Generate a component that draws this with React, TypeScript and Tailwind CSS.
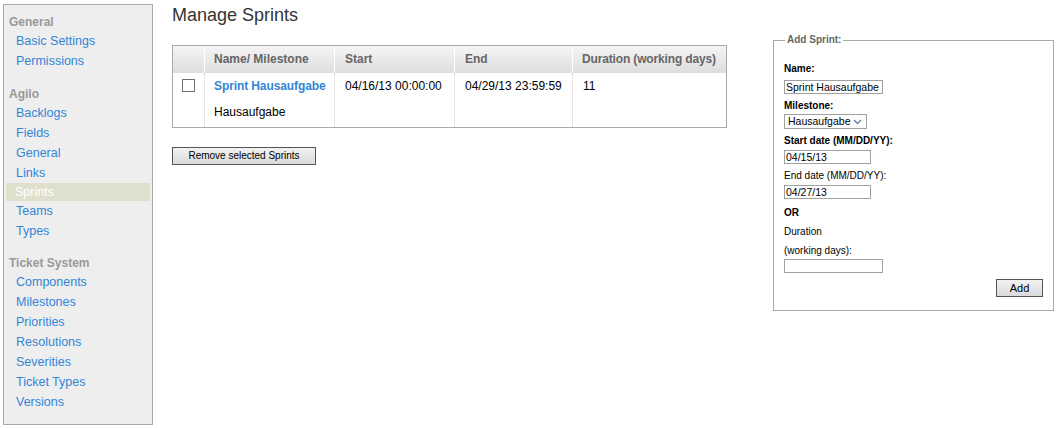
import React from 'react'

const font = { fontFamily: '"Liberation Sans", Arial, sans-serif' }

const sections = [
  { title: 'General', links: ['Basic Settings', 'Permissions'] },
  { title: 'Agilo', links: ['Backlogs', 'Fields', 'General', 'Links', 'Sprints', 'Teams', 'Types'] },
  { title: 'Ticket System', links: ['Components', 'Milestones', 'Priorities', 'Resolutions', 'Severities', 'Ticket Types', 'Versions'] },
]

const Sidebar: React.FC = () => (
  <div className="ml-[3px] mt-[4px] w-[150px] h-[421px] shrink-0 bg-[#eeeeee] border border-[#aaaaaa] pt-[8px]">
    {sections.map((s, i) => (
      <div key={s.title} className={i > 0 ? 'mt-[13.5px]' : ''}>
        <div className="h-[18px] leading-[18px] pl-[5px] text-[12px] font-bold text-[#999999]">{s.title}</div>
        {s.links.map(l =>
          l === 'Sprints' ? (
            <div key={l} className="h-[18px] leading-[18px] mx-[2px] pl-[9px] bg-[#dedfcd] text-white text-[12.5px]">
              {l}
            </div>
          ) : (
            <div key={l} className="h-[20px] leading-[20px] pl-[12px] text-[12.5px] text-[#3385d6]">
              {l}
            </div>
          )
        )}
      </div>
    ))}
  </div>
)

const Chevron: React.FC = () => (
  <svg width="9" height="6" viewBox="0 0 9 6" className="ml-[3px]">
    <path d="M1 1 L4.5 4.5 L8 1" fill="none" stroke="#6b7f9a" strokeWidth="1.4" />
  </svg>
)

const SprintTable: React.FC = () => (
  <div className="mt-[19px] w-[555px] border border-[#aaaaaa] whitespace-nowrap">
    <div className="flex h-[27px] bg-gradient-to-b from-[#f5f5f5] to-[#dddddd] text-[12px] font-bold text-[#666666] leading-[27px]">
      <div className="w-[32px] border-r border-white" />
      <div className="w-[130px] pl-[9px] border-r border-white">Name/ Milestone</div>
      <div className="w-[120px] pl-[10px] border-r border-white">Start</div>
      <div className="w-[118px] pl-[10px] border-r border-white">End</div>
      <div className="flex-1 pl-[9px] tracking-[-0.15px]">Duration (working days)</div>
    </div>
    <div className="flex h-[54px] text-[12px] text-black leading-[16px] bg-white">
      <div className="w-[32px] border-r border-dotted border-[#cccccc] pt-[6px] pl-[9px]">
        <div className="w-[13px] h-[13px] border border-[#707070] bg-white" />
      </div>
      <div className="w-[130px] pl-[9px] pt-[5px] border-r border-dotted border-[#cccccc]">
        <div className="font-bold text-[#3385d6] tracking-[-0.1px]">Sprint Hausaufgabe</div>
        <div className="mt-[10px]">Hausaufgabe</div>
      </div>
      <div className="w-[120px] pl-[10px] pt-[5px] border-r border-dotted border-[#cccccc]">04/16/13 00:00:00</div>
      <div className="w-[118px] pl-[10px] pt-[5px] border-r border-dotted border-[#cccccc]">04/29/13 23:59:59</div>
      <div className="flex-1 pl-[10px] pt-[5px]">11</div>
    </div>
  </div>
)

const inputCls = 'block h-[14px] border border-[#a0a0a0] bg-white px-[1px] text-[10.5px] leading-[12px] text-black whitespace-nowrap overflow-hidden'

const AddSprint: React.FC = () => (
  <fieldset className="ml-[46px] mt-[34px] w-[281px] h-[277px] border border-[#aaaaaa] px-[10px] text-[10px] text-black whitespace-nowrap">
    <legend className="ml-[1px] px-[2px] leading-[12px] font-bold text-[#666666]">Add Sprint:</legend>
    <div className="mt-[15px] h-[14px] leading-[15px] font-bold">Name:</div>
    <div className={`${inputCls} mt-[5px] w-[99px]`}>Sprint Hausaufgabe</div>
    <div className="mt-[4px] h-[14px] leading-[15px] font-bold">Milestone:</div>
    <div className="mt-[2px] flex items-center w-[83px] h-[15px] border border-[#a0a0a0] bg-white pl-[3px] text-[10.5px] leading-[13px]">
      <span>Hausaufgabe</span>
      <Chevron />
    </div>
    <div className="mt-[4px] h-[14px] leading-[15px] font-bold">Start date (MM/DD/YY):</div>
    <div className={`${inputCls} mt-[3px] w-[87px]`}>04/15/13</div>
    <div className="mt-[4px] h-[14px] leading-[15px]">End date (MM/DD/YY):</div>
    <div className={`${inputCls} mt-[3px] w-[87px]`}>04/27/13</div>
    <div className="mt-[6px] h-[14px] leading-[15px] font-bold">OR</div>
    <div className="mt-[5px] h-[14px] leading-[15px]">Duration</div>
    <div className="mt-[5px] h-[14px] leading-[15px]">(working days):</div>
    <div className={`${inputCls} mt-[2px] w-[99px]`} />
    <div className="mt-[6px] flex justify-end">
      <button className="w-[47px] h-[18px] border border-[#555555] bg-gradient-to-b from-[#f2f2f2] to-[#dadada] text-[11px] leading-[16px] text-black">
        Add
      </button>
    </div>
  </fieldset>
)

const App: React.FC = () => {
  return (
    <div className="w-[1060px] h-[428px] bg-white flex overflow-hidden" style={font}>
      <Sidebar />
      <div className="ml-[19px] flex">
        <div className="w-[555px]">
          <h1 className="mt-[4px] h-[22px] leading-[22px] text-[18px] text-[#333333]">Manage Sprints</h1>
          <SprintTable />
          <button className="mt-[19px] w-[144px] h-[18px] border border-[#555555] bg-gradient-to-b from-[#f2f2f2] to-[#dadada] text-[10px] leading-[16px] text-black">
            Remove selected Sprints
          </button>
        </div>
        <AddSprint />
      </div>
    </div>
  )
}

export default App
